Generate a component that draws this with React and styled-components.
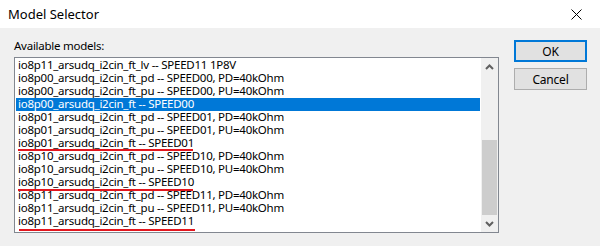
import React from "react";
import styled, { createGlobalStyle } from "styled-components";

const GlobalStyle = createGlobalStyle`
  html, body { margin: 0; padding: 0; background: #f0f0f0; }
  body { font-family: "Noto Sans", "Open Sans", sans-serif; font-size: 12px; color: #000; }
`;

const Window = styled.div`
  width: 600px;
  height: 246px;
  display: flex;
  flex-direction: column;
  background: #f0f0f0;
  overflow: hidden;
`;

const TitleBar = styled.div`
  height: 28px;
  flex: none;
  background: #ffffff;
  display: flex;
  align-items: center;
  justify-content: space-between;
  padding-left: 8px;
`;

const Title = styled.span`
  font-size: 13px;
  color: #000;
`;

const CloseButton = styled.div`
  width: 46px;
  height: 28px;
  display: flex;
  align-items: center;
  justify-content: center;
  margin-right: 1px;
`;

const Body = styled.div`
  display: flex;
  padding: 10px 0 0 14px;
`;

const LeftColumn = styled.div`
  display: flex;
  flex-direction: column;
  width: 485px;
`;

const Label = styled.div`
  height: 15px;
  line-height: 15px;
  margin-bottom: 4px;
  font-size: 11.5px;
  letter-spacing: -0.25px;
`;

const ListBox = styled.div`
  box-sizing: border-box;
  height: 176px;
  border: 1px solid #828790;
  background: #ffffff;
  display: flex;
  padding: 1px 0 0 1px;
`;

const Rows = styled.div`
  width: 464px;
  display: flex;
  flex-direction: column;
`;

const Row = styled.div`
  position: relative;
  height: 13px;
  line-height: 12px;
  padding-left: 2px;
  font-size: 11.5px;
  letter-spacing: -0.25px;
  white-space: nowrap;
  background: ${(p) => (p.$selected ? "#0078d7" : "transparent")};
  color: ${(p) => (p.$selected ? "#ffffff" : "#000000")};
`;

const Underline = styled.span`
  position: absolute;
  left: ${(p) => p.$left}px;
  top: ${(p) => p.$top}px;
  width: ${(p) => p.$width}px;
  height: 2px;
  background: #e3161e;
  z-index: 2;
`;

const ScrollBar = styled.div`
  margin-left: 1px;
  margin-top: -1px;
  width: 17px;
  height: 174px;
  background: #f0f0f0;
  display: flex;
  flex-direction: column;
`;

const ScrollArrow = styled.div`
  height: 17px;
  flex: none;
  display: flex;
  align-items: center;
  justify-content: center;
`;

const Track = styled.div`
  flex: 1;
  display: flex;
  flex-direction: column;
  padding-top: 65px;
`;

const Thumb = styled.div`
  height: 75px;
  margin: 0 1px;
  background: #cdcdcd;
`;

const RightColumn = styled.div`
  display: flex;
  flex-direction: column;
  gap: 6px;
  margin-left: 15px;
  margin-top: 2px;
`;

const Button = styled.div`
  box-sizing: border-box;
  width: 73px;
  height: 22px;
  display: flex;
  align-items: center;
  justify-content: center;
  background: #e1e1e1;
  border: ${(p) => (p.$default ? "2px solid #0078d7" : "1px solid #adadad")};
  font-size: 12px;
  letter-spacing: -0.2px;
`;

const rows = [
  "io8p11_arsudq_i2cin_ft_lv -- SPEED11 1P8V",
  "io8p00_arsudq_i2cin_ft_pd -- SPEED00, PD=40kOhm",
  "io8p00_arsudq_i2cin_ft_pu -- SPEED00, PU=40kOhm",
  "io8p00_arsudq_i2cin_ft -- SPEED00",
  "io8p01_arsudq_i2cin_ft_pd -- SPEED01, PD=40kOhm",
  "io8p01_arsudq_i2cin_ft_pu -- SPEED01, PU=40kOhm",
  "io8p01_arsudq_i2cin_ft -- SPEED01",
  "io8p10_arsudq_i2cin_ft_pd -- SPEED10, PD=40kOhm",
  "io8p10_arsudq_i2cin_ft_pu -- SPEED10, PU=40kOhm",
  "io8p10_arsudq_i2cin_ft -- SPEED10",
  "io8p11_arsudq_i2cin_ft_pd -- SPEED11, PD=40kOhm",
  "io8p11_arsudq_i2cin_ft_pu -- SPEED11, PU=40kOhm",
  "io8p11_arsudq_i2cin_ft -- SPEED11",
];

const underlines = {
  6: { left: 2, top: 12, width: 175 },
  9: { left: 2, top: 13, width: 175 },
  12: { left: 3, top: 14, width: 176 },
};

const Chevron = ({ up }) => (
  <svg width="9" height="6" viewBox="0 0 9 6">
    <path
      d={up ? "M1 5 L4.5 1.5 L8 5" : "M1 1 L4.5 4.5 L8 1"}
      fill="none"
      stroke="#606060"
      strokeWidth="2"
    />
  </svg>
);

export default function App() {
  return (
    <>
      <GlobalStyle />
      <Window>
        <TitleBar>
          <Title>Model Selector</Title>
          <CloseButton>
            <svg width="11" height="11" viewBox="0 0 11 11">
              <path d="M0.5 0.5 L10.5 10.5 M10.5 0.5 L0.5 10.5" stroke="#000" strokeWidth="1" />
            </svg>
          </CloseButton>
        </TitleBar>
        <Body>
          <LeftColumn>
            <Label>Available models:</Label>
            <ListBox>
              <Rows>
                {rows.map((r, i) => (
                  <Row key={i} $selected={i === 3}>
                    {r}
                    {underlines[i] && (
                      <Underline
                        $left={underlines[i].left}
                        $top={underlines[i].top}
                        $width={underlines[i].width}
                      />
                    )}
                  </Row>
                ))}
              </Rows>
              <ScrollBar>
                <ScrollArrow>
                  <Chevron up />
                </ScrollArrow>
                <Track>
                  <Thumb />
                </Track>
                <ScrollArrow>
                  <Chevron />
                </ScrollArrow>
              </ScrollBar>
            </ListBox>
          </LeftColumn>
          <RightColumn>
            <Button $default>OK</Button>
            <Button>Cancel</Button>
          </RightColumn>
        </Body>
      </Window>
    </>
  );
}
